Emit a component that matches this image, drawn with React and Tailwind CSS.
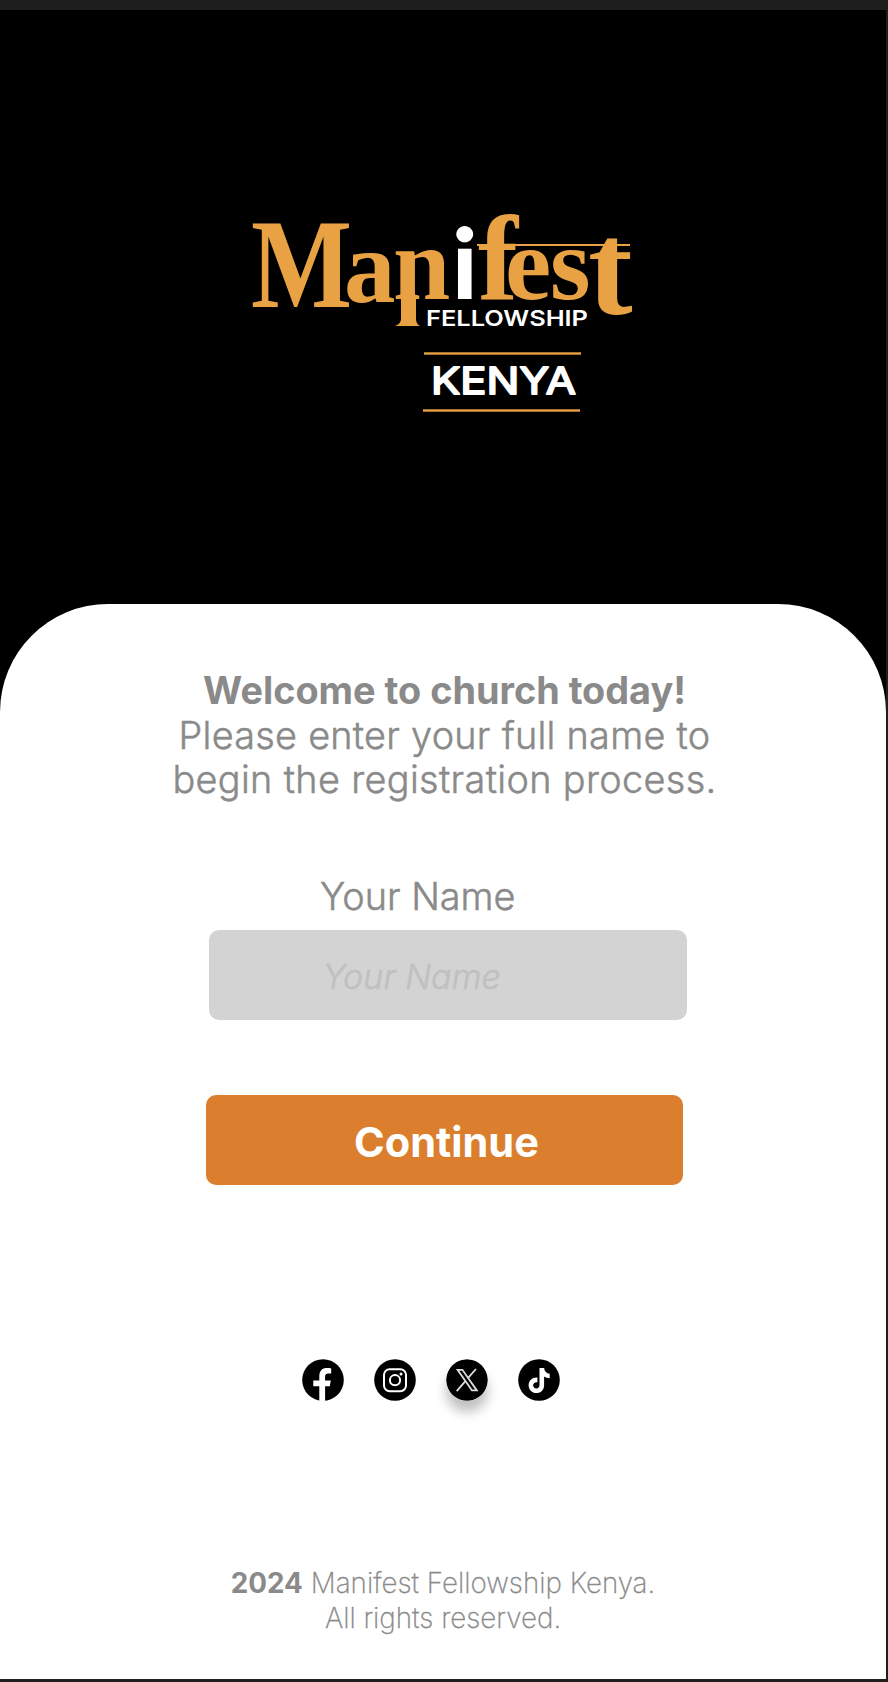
import React from "react";

function Logo() {
  return (
    <svg
      width="400"
      height="220"
      viewBox="240 200 400 220"
      role="img"
      aria-label="Manifest Fellowship Kenya"
      className="ml-[240px] block"
    >
      <g fill="#e9a243" fontFamily="'Liberation Serif', serif" fontWeight="700">
        <text y="307">
          <tspan x="251" y="307" fontSize="126" textLength="101" lengthAdjust="spacingAndGlyphs">M</tspan>
          <tspan x="344" y="302" fontSize="103">a</tspan>
          <tspan x="393" y="299" fontSize="103">n</tspan>
          <tspan x="452" y="299" fontSize="98" fill="#ffffff" fontFamily="Lato, sans-serif" fontWeight="900">i</tspan>
          <tspan x="478" y="299" fontSize="120">f</tspan>
          <tspan x="505" y="299" fontSize="104">e</tspan>
          <tspan x="550" y="299" fontSize="104">s</tspan>
          <tspan x="588" y="314" fontSize="134">t</tspan>
        </text>
        <path d="M401 299h15v20q0 5 4 7h-25q6-2 6-7z" />
        <rect x="477" y="244" width="153" height="2" />
        <rect x="424" y="352.3" width="157" height="2.4" />
        <rect x="423" y="409.3" width="157" height="2.4" />
      </g>
      <text x="426" y="325.5" fill="#fff" fontFamily="Inter, sans-serif" fontWeight="600" fontSize="21.6" textLength="162" lengthAdjust="spacingAndGlyphs">
        FELLOWSHIP
      </text>
      <text x="431" y="394" fill="#fff" stroke="#fff" strokeWidth="1.8" strokeLinejoin="round" fontFamily="Inter, sans-serif" fontWeight="400" fontSize="36.5" textLength="145" lengthAdjust="spacingAndGlyphs">
        KENYA
      </text>
    </svg>
  );
}

function Facebook() {
  return (
    <svg viewBox="0 0 42 42" className="size-[42px]" aria-label="Facebook">
      <circle cx="21" cy="21" r="20.8" />
      <path fill="#fff" d="M17.3 42V27.2h-6v-5.7h6v-4.2c0-5.6 3-8.2 7.9-8.2 1.6 0 2.8.1 4 .4v5h-2.8c-2.3 0-3.3 1.2-3.3 3.2v3.8h5.7l-1 5.7h-4.7V42z" />
    </svg>
  );
}

function Instagram() {
  return (
    <svg viewBox="0 0 42 42" className="size-[42px]" aria-label="Instagram">
      <circle cx="21" cy="21" r="20.8" />
      <g fill="none" stroke="#fff" strokeWidth="2">
        <rect x="10" y="10.2" width="22" height="22" rx="5.6" />
        <circle cx="21" cy="21.2" r="5.1" />
      </g>
      <circle cx="27" cy="15" r="1.5" fill="#fff" />
    </svg>
  );
}

function XLogo() {
  return (
    <svg viewBox="0 0 42 42" className="size-[42px] rounded-full shadow-[0_11px_12px_rgba(0,0,0,0.25)]" aria-label="X">
      <circle cx="21" cy="21" r="20.8" />
      <g fill="none" stroke="#ddd" strokeWidth="1.8">
        <path d="M11.6 10.8h4.8l14.4 20.6H26z" />
        <path d="M30 10l-8.3 9.3M19.4 22.2l-8.7 9.9" />
      </g>
    </svg>
  );
}

function TikTok() {
  return (
    <svg viewBox="0 0 42 42" className="size-[42px]" aria-label="TikTok">
      <circle cx="21" cy="21" r="20.8" />
      <path fill="#fff" d="M21.5 9h4.6c.3 3.3 2.4 5.4 5.6 5.7v4.6c-2.1 0-4-.6-5.6-1.7v8.6c0 4.8-3.4 7.9-7.7 7.9-4.4 0-7.8-3.4-7.8-7.8 0-4.7 4-8.2 8.8-7.7v4.7c-2.3-.6-4.3.9-4.3 3 0 1.9 1.5 3.2 3.2 3.2 2 0 3.2-1.4 3.2-3.4z" />
    </svg>
  );
}

export default function App() {
  return (
    <div className="h-[1682px] w-[888px] overflow-hidden bg-[#1e1e1e] pt-[10px] font-['Inter',sans-serif] text-[#8a8a8a]">
      <main className="flex h-[1669px] w-[886px] flex-col bg-black pt-[190px]">
        <Logo />
        <section className="mt-[184px] flex h-[1075px] flex-col rounded-t-[108px] bg-white pt-[64px]">
          <h1 className="pl-[3px] text-center text-[37.8px] font-light leading-[44.7px] whitespace-nowrap">
            <strong className="block font-bold">Welcome to church today!</strong>
            <span className="block tracking-[0.28px] [-webkit-text-stroke:0.5px_#8a8a8a]">Please enter your full name to</span>
            <span className="block tracking-[0.36px] [-webkit-text-stroke:0.5px_#8a8a8a]">begin the registration process.</span>
          </h1>
          <label htmlFor="name" className="mt-[72px] ml-[320px] text-[37.8px] font-light leading-[45px] [-webkit-text-stroke:0.5px_#8a8a8a]">
            Your Name
          </label>
          <input
            id="name"
            placeholder="Your Name"
            className="mt-[11px] ml-[209px] h-[90px] w-[478px] rounded-[10px] bg-[#d3d3d3] pt-[2px] pl-[114px] text-[34.1px] font-light outline-none placeholder:text-[#c0c0c0] placeholder:italic [-webkit-text-stroke:0.5px_#c0c0c0]"
          />
          <button className="mt-[75px] ml-[206px] h-[90px] w-[477px] rounded-[10px] bg-[#db7f2e] pt-[4px] pl-[4px] text-[41.5px] font-bold text-white">
            Continue
          </button>
          <div className="mt-[174px] ml-[301.5px] flex gap-[30px]">
            <Facebook />
            <Instagram />
            <XLogo />
            <TikTok />
          </div>
          <footer className="mt-[165px] text-center text-[27.8px] font-extralight leading-[34.4px]">
            <p>
              <strong className="font-bold">2024</strong> <span className="[-webkit-text-stroke:0.3px_#8a8a8a]">Manifest Fellowship Kenya.</span>
            </p>
            <p className="[-webkit-text-stroke:0.3px_#8a8a8a]">All rights reserved.</p>
          </footer>
        </section>
      </main>
    </div>
  );
}
